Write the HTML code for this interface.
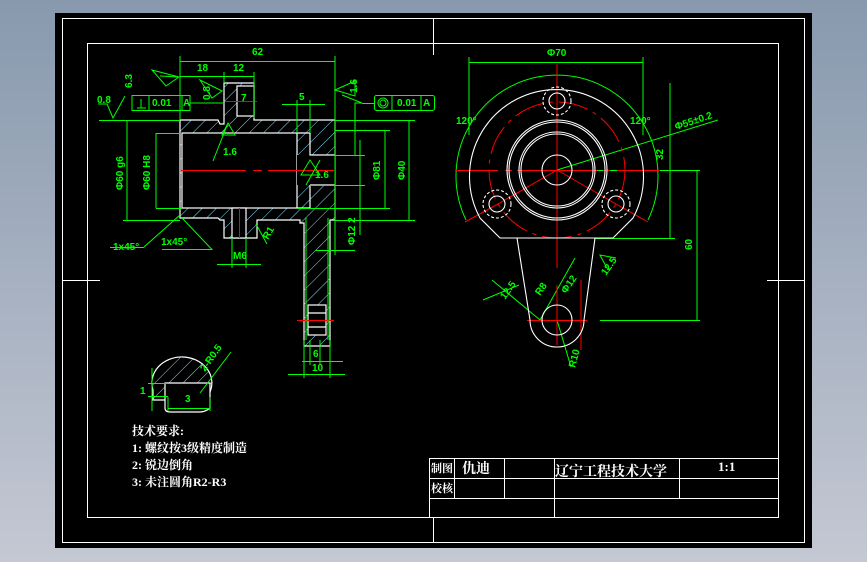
<!DOCTYPE html>
<html><head><meta charset="utf-8"><style>
html,body{margin:0;padding:0;width:867px;height:562px;overflow:hidden;background:linear-gradient(#8899ae,#c4c8d3);}
svg{position:absolute;left:0;top:0}
text{font-family:"Liberation Sans Narrow","Liberation Sans","Noto Sans CJK SC",sans-serif;}
.g{fill:#00ff00;font-size:10px;font-weight:bold}
.w{fill:#fff;font-family:"Liberation Serif","Noto Serif CJK SC","Noto Sans CJK SC",serif;font-size:12px;font-weight:bold}
</style></head><body>
<svg width="867" height="562" viewBox="0 0 867 562">
<defs>
<pattern id="h" patternUnits="userSpaceOnUse" width="10" height="10" patternTransform="rotate(45)">
<rect width="10" height="10" fill="#000"/><line x1="0" y1="0" x2="0" y2="10" stroke="#7fdfff" stroke-width="1"/>
</pattern>
</defs>
<rect x="55" y="13" width="757" height="535" fill="#000"/>
<g fill="none" stroke="#fff" stroke-width="1">
<rect x="62.5" y="18.5" width="742" height="524"/>
<rect x="87.5" y="43.5" width="691" height="474"/>
<line x1="433.5" y1="18" x2="433.5" y2="55"/>
<line x1="433.5" y1="518" x2="433.5" y2="543"/>
<line x1="62" y1="280.5" x2="100" y2="280.5"/>
<line x1="767" y1="280.5" x2="805" y2="280.5"/>
<rect x="429.5" y="458.5" width="349" height="59"/>
<line x1="429" y1="478.5" x2="779" y2="478.5"/>
<line x1="429" y1="498.5" x2="779" y2="498.5"/>
<line x1="454.5" y1="458" x2="454.5" y2="498"/>
<line x1="504.5" y1="458" x2="504.5" y2="498"/>
<line x1="554.5" y1="458" x2="554.5" y2="518"/>
<line x1="679.5" y1="458" x2="679.5" y2="498"/>
</g>
<text x="431" y="472" class="w" style="font-size:11px">制图</text>
<text x="431" y="492" class="w" style="font-size:11px">校核</text>
<text x="462" y="473" class="w" style="font-size:14px">仇迪</text>
<text x="555" y="476" class="w" style="font-size:14px">辽宁工程技术大学</text>
<text x="718" y="471" class="w" style="font-size:13px">1:1</text>
<text x="132" y="435" class="w">技术要求:</text>
<text x="132" y="452" class="w">1: 螺纹按3级精度制造</text>
<text x="132" y="469" class="w">2: 锐边倒角</text>
<text x="132" y="486" class="w">3: 未注圆角R2-R3</text>

<g stroke="#fff" stroke-width="1.2">
<path d="M180,120 H218 L220,124 H224 V83 H254 V120 H335 V220 H330 V346 H304 V223 H300 V220 H257 V238 H224 V220 H220 L218,218 H180 Z" fill="url(#h)"/>
<rect x="182" y="133" width="115" height="75" fill="#000"/>
<rect x="297" y="155" width="38" height="30" fill="#000" stroke="none"/>
<path d="M310,133 V155 H335 M310,185 H335 M310,185 V208 M297,133 H310 M297,208 H310" fill="none"/>
<rect x="232" y="208" width="14" height="30" fill="#000"/>
<rect x="237" y="86" width="17" height="30" fill="#000"/>
<rect x="308" y="305" width="18" height="30" fill="#000"/>
<path d="M308,313 H326 M308,327 H326" fill="none"/>
</g>
<g stroke="#ff0000" stroke-width="1">
<line x1="181" y1="170.5" x2="246" y2="170.5"/><line x1="253" y1="170.5" x2="262" y2="170.5"/><line x1="268" y1="170.5" x2="334" y2="170.5"/>
<line x1="239.5" y1="208" x2="239.5" y2="238"/>
<line x1="225" y1="101.5" x2="257" y2="101.5"/>
<line x1="297" y1="320.5" x2="334" y2="320.5"/>
</g>
<g stroke="#00ff00" stroke-width="1" fill="none">
<path d="M180,56 V120 M335,56 V255 M180,61.5 H335 M224,72 V83 M254,72 V118 M180,76.5 H254"/>
<path d="M152,70 L179,77 L166,86 Z M160,76 L179,77"/>
<path d="M200,80 L222,91 L212,98 Z"/>
<path d="M99,120.5 H180 M98,104 H107 L113,118 L125,96 M107,104 L113,118"/>
<rect x="132" y="95.5" width="58" height="15"/><path d="M149,95 V110 M182,95 V110 M190,103 H224"/>
<path d="M141,99 V108 M137,108 H146"/>
<path d="M127,120 V220 M123,220.5 H180 M156,133.5 H182 M156,208.5 H182 M156,133 V208"/>
<path d="M144,247.5 H110 M144,247 L180,215 M162,249.5 H212 L182,218"/>
<path d="M217,264.5 H261 M232,238 V268 M246,238 V268"/>
<path d="M256,224 L267,244"/>
<path d="M282,104.5 H325 M297,100 V133 M310,100 V133"/>
<path d="M335,90 L355,81 L355,96 Z M342,95 L362,103 H355 V155 M362,103.5 H374"/>
<rect x="374.5" y="95.5" width="60" height="15" rx="2"/><path d="M392,95 V110 M421,95 V110"/>
<circle cx="383" cy="103" r="5"/><circle cx="383" cy="103" r="3"/>
<path d="M335,120.5 H415 M335,130.5 H390 M310,155.5 H365 M310,185.5 H365 M297,208.5 H390 M335,220.5 H415 M385,130 V208 M409,120 V220 M360,140 V235 M320,175 L310,160 L301,175 Z M306,185 L320,160"/>
<path d="M315,250.5 H355 M306,218 V340 M328,218 V340 M302,361.5 H343 M288,374.5 H345 M310,340 V365 M320,340 V365 M304,340 V378 M330,340 V378"/>
<path d="M222,135 L228,123 L235,135 Z M213,161 L228,123"/>
</g>
<text x="252" y="55" class="g">62</text>
<text x="197" y="71" class="g">18</text>
<text x="233" y="71" class="g">12</text>
<text x="241" y="101" class="g">7</text>
<text x="299" y="100" class="g">5</text>
<text x="97" y="103" class="g">0.8</text>
<text x="152" y="106" class="g">0.01</text>
<text x="183" y="106" class="g">A</text>
<text x="397" y="106" class="g">0.01</text>
<text x="423" y="106" class="g">A</text>
<text x="223" y="155" class="g">1.6</text>
<text x="315" y="178" class="g">1.6</text>
<text x="113" y="250" class="g">1x45°</text>
<text x="161" y="245" class="g">1x45°</text>
<text x="233" y="259" class="g">M6</text>
<text x="313" y="357" class="g">6</text>
<text x="312" y="371" class="g">10</text>
<text transform="translate(123,190) rotate(-90)" class="g">Φ60 g6</text>
<text transform="translate(150,190) rotate(-90)" class="g">Φ60 H8</text>
<text transform="translate(380,180) rotate(-90)" class="g">Φ81</text>
<text transform="translate(405,180) rotate(-90)" class="g">Φ40</text>
<text transform="translate(355,245) rotate(-90)" class="g">Φ12 2</text>
<text transform="translate(132,88) rotate(-90)" class="g">6.3</text>
<text transform="translate(210,100) rotate(-90)" class="g">0.8</text>
<text transform="translate(357,93) rotate(-90)" class="g">1.6</text>
<text transform="translate(268,240) rotate(-60)" class="g">R1</text>
<g stroke="#fff" stroke-width="1.2">
<path d="M153,390 A30,26 0 1 1 210,392 L204,400 H153 Z" fill="url(#h)"/>
<path d="M168,383 H210 V408 Q205,412 200,412 H170 Q165,412 165,408 V383 Z" fill="#000"/>
</g>
<g stroke="#00ff00" fill="none"><path d="M152,368 V411 M148,383.5 H168 M148,396.5 H168 M168,397 V411 M210,397 V411 M168,408.5 H210 M200,393 L231,352"/></g>
<text x="185" y="402" class="g">3</text>
<text x="140" y="394" class="g">1</text>
<text transform="translate(205,372) rotate(-55)" class="g">2-R0.5</text>

<g stroke="#00ff00" fill="none" stroke-width="1">
<path d="M469,57 V135 M643,57 V135 M469,62.5 H643"/>
<path d="M466,220 A101,101 0 1 1 648,220"/>
<path d="M557,170 L718,120 M595,238.5 H675 M590,170.5 H700 M600,320.5 H700 M670,83 V238 M697,170 V320"/>
<path d="M492,280 L540,320 L575,258 M483,300 L519,285 M608,270 L600,255 L616,258 M557,320 L571,367"/>
</g>
<g stroke="#ff0000" fill="none" stroke-width="1">
<circle cx="557" cy="170" r="68" stroke-dasharray="30,6,4,6"/>
<path d="M557,64 V268 M581,280 V350 M557,285 V345"/>
<path d="M455,170.5 H498 M505,170.5 H512 M517,170.5 H597 M603,170.5 H610 M617,170.5 H660"/>
<path d="M557,170 L498,204 M557,170 L616,204 M465,222 L498,204 M616,204 L648,222"/>
<path d="M527,320.5 H587"/>
</g>
<g stroke="#fff" fill="none" stroke-width="1.1">
<path d="M500,238 L480,218 A87,87 0 1 1 633,218 L613,238 Z"/>
<circle cx="557" cy="170" r="50"/><circle cx="557" cy="170" r="48"/>
<circle cx="557" cy="170" r="38"/><circle cx="557" cy="170" r="36"/>
<circle cx="557" cy="170" r="15"/>
<circle cx="557" cy="101" r="8"/><circle cx="557" cy="101" r="14" stroke-dasharray="3,2"/>
<circle cx="497" cy="204" r="8"/><circle cx="497" cy="204" r="14" stroke-dasharray="3,2"/>
<circle cx="616" cy="204" r="8"/><circle cx="616" cy="204" r="14" stroke-dasharray="3,2"/>
<path d="M517,238 L530,320 A27,27 0 0 0 584,320 L595,238"/>
<circle cx="557" cy="320" r="15"/>
</g>
<text x="547" y="56" class="g">Φ70</text>
<text x="456" y="124" class="g">120°</text>
<text x="630" y="124" class="g">120°</text>
<text transform="translate(676,130) rotate(-18)" class="g">Φ55±0.2</text>
<text transform="translate(663,160) rotate(-90)" class="g">32</text>
<text transform="translate(692,250) rotate(-90)" class="g">60</text>
<text transform="translate(505,300) rotate(-55)" class="g">12.5</text>
<text transform="translate(540,296) rotate(-55)" class="g">R8</text>
<text transform="translate(566,294) rotate(-55)" class="g">Φ12</text>
<text transform="translate(606,276) rotate(-55)" class="g">12.5</text>
<text transform="translate(575,368) rotate(-75)" class="g">R10</text>
</svg>
</body></html>
